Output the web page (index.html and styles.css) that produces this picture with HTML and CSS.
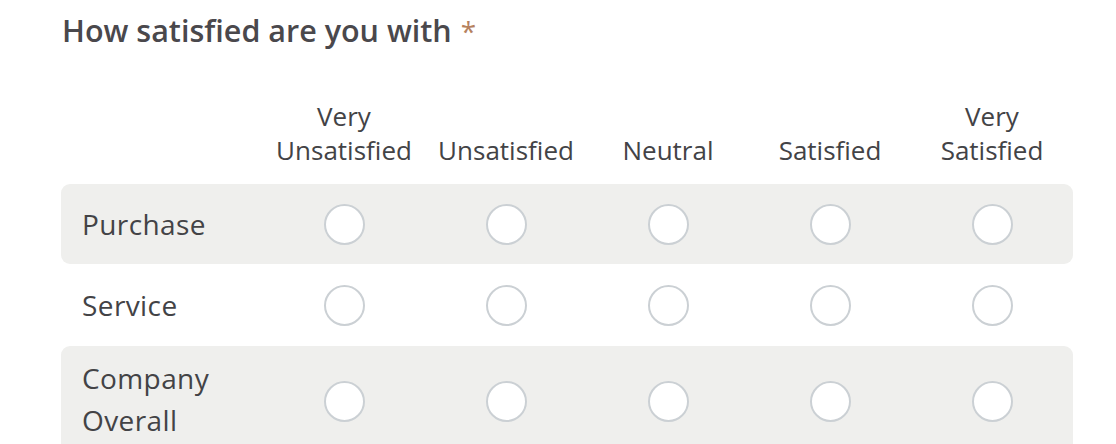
FILE: index.html
```html
<!DOCTYPE html>
<html>
<head>
<meta charset="utf-8">
<link rel="stylesheet" href="styles.css">
</head>
<body>
<div class="page">
  <div class="title">How satisfied are you with <span class="req">*</span></div>
  <div class="matrix">
    <div class="row head">
      <div class="label"></div>
      <div class="col">Very<br>Unsatisfied</div>
      <div class="col">Unsatisfied</div>
      <div class="col">Neutral</div>
      <div class="col">Satisfied</div>
      <div class="col">Very<br>Satisfied</div>
    </div>
    <div class="row shade r1">
      <div class="label">Purchase</div>
      <div class="cell"><span class="radio"></span></div>
      <div class="cell"><span class="radio"></span></div>
      <div class="cell"><span class="radio"></span></div>
      <div class="cell"><span class="radio"></span></div>
      <div class="cell"><span class="radio"></span></div>
    </div>
    <div class="row r2">
      <div class="label">Service</div>
      <div class="cell"><span class="radio"></span></div>
      <div class="cell"><span class="radio"></span></div>
      <div class="cell"><span class="radio"></span></div>
      <div class="cell"><span class="radio"></span></div>
      <div class="cell"><span class="radio"></span></div>
    </div>
    <div class="row shade r3">
      <div class="label">Company<br>Overall</div>
      <div class="cell"><span class="radio"></span></div>
      <div class="cell"><span class="radio"></span></div>
      <div class="cell"><span class="radio"></span></div>
      <div class="cell"><span class="radio"></span></div>
      <div class="cell"><span class="radio"></span></div>
    </div>
  </div>
</div>
</body>
</html>
```
FILE: styles.css
```css
html, body {
  margin: 0;
  padding: 0;
  background: #ffffff;
}
body {
  font-family: "Open Sans", "Noto Sans", "Liberation Sans", sans-serif;
  color: #434346;
}
.page {
  padding: 10px 0 0 61px;
  width: 1012px;
}
.title {
  font-size: 30.5px;
  font-weight: 600;
  line-height: 40px;
  padding-left: 1px;
  color: #4a484c;
}
.req {
  color: #b5815e;
  font-weight: 400;
  font-size: 28px;
  margin-left: 1px;
}
.matrix {
  margin-top: 48px;
}
.row {
  display: grid;
  grid-template-columns: 202px repeat(5, 162px);
  align-items: center;
}
.head {
  font-size: 26px;
  line-height: 34px;
  margin-bottom: 17px;
  align-items: end;
}
.col {
  text-align: center;
}
.shade {
  background: #efefed;
  border-radius: 9px;
}
.r1 { height: 80px; }
.r2 { height: 82px; }
.r3 { height: 110px; }
.r3 .label { padding-bottom: 4px; }
.label {
  padding-left: 21px;
  font-size: 28px;
  line-height: 42px;
  letter-spacing: 0.4px;
}
.cell {
  display: flex;
  justify-content: center;
}
.radio {
  width: 37px;
  height: 37px;
  border: 2px solid #cbd0d4;
  border-radius: 50%;
  background: #ffffff;
  box-sizing: content-box;
}
```
